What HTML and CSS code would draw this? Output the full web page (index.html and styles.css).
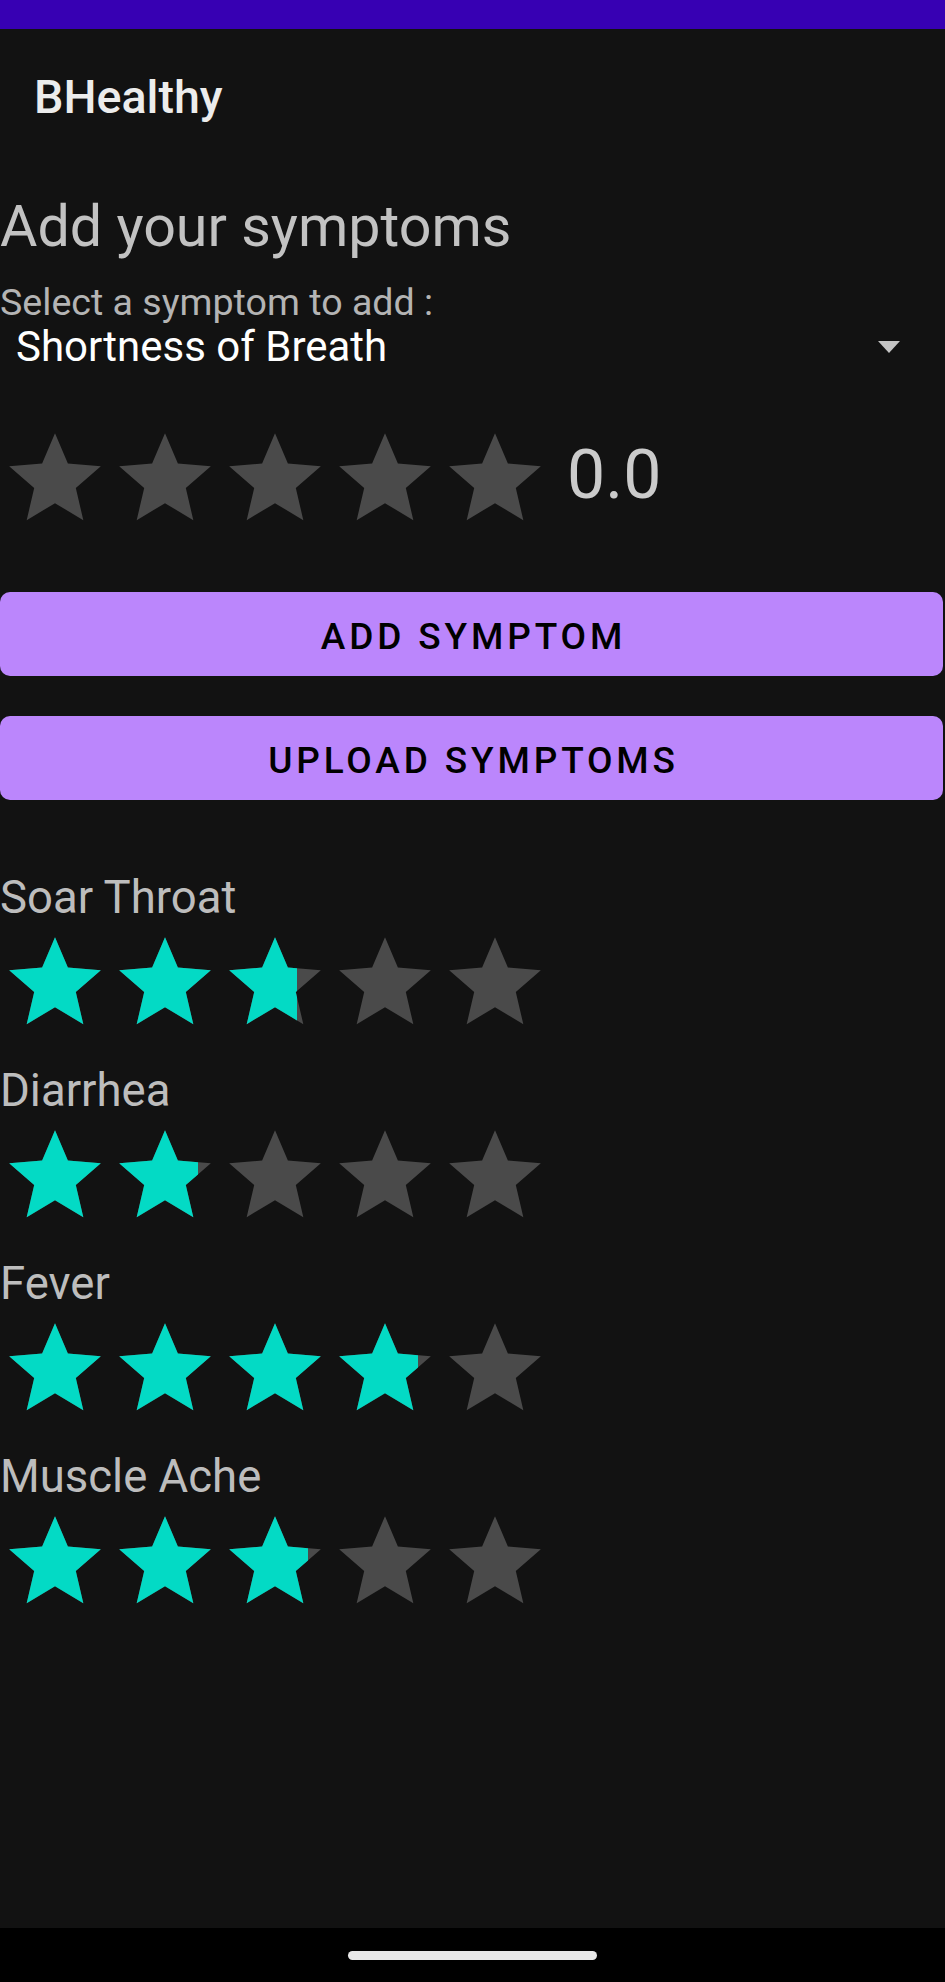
FILE: index.html
```html
<!DOCTYPE html>
<html lang="en">
<head>
<meta charset="utf-8">
<title>BHealthy</title>
<link rel="stylesheet" href="styles.css">
</head>
<body>
<svg class="defs" width="0" height="0" aria-hidden="true">
  <symbol id="star" viewBox="0 0 24 24">
    <path d="M12 17.27L18.18 21l-1.64-7.03L22 9.24l-7.19-.61L12 2 9.19 8.63 2 9.24l5.46 4.73L5.82 21z"/>
  </symbol>
</svg>
<div class="screen">
  <div class="statusbar"></div>
  <header class="toolbar"><h1 class="app-title">BHealthy</h1></header>
  <main class="content">
    <h2 class="page-title">Add your symptoms</h2>
    <p class="select-label">Select a symptom to add :</p>
    <div class="spinner">
      <span class="spinner-value">Shortness of Breath</span>
      <span class="spinner-arrow"></span>
    </div>
    <div class="rating-row">
      <div class="rating">
        <div class="rating-layer">
          <svg class="star"><use href="#star"/></svg><svg class="star"><use href="#star"/></svg><svg class="star"><use href="#star"/></svg><svg class="star"><use href="#star"/></svg><svg class="star"><use href="#star"/></svg>
        </div>
      </div>
      <span class="rating-value">0.0</span>
    </div>
    <button class="btn btn-add">Add Symptom</button>
    <button class="btn btn-upload">Upload Symptoms</button>
    <ul class="symptom-list">
      <li class="symptom">
        <p class="symptom-name">Soar Throat</p>
        <div class="rating">
          <div class="rating-layer"><svg class="star"><use href="#star"/></svg><svg class="star"><use href="#star"/></svg><svg class="star"><use href="#star"/></svg><svg class="star"><use href="#star"/></svg><svg class="star"><use href="#star"/></svg></div>
          <div class="rating-layer rating-fill" style="width:54%"><svg class="star"><use href="#star"/></svg><svg class="star"><use href="#star"/></svg><svg class="star"><use href="#star"/></svg><svg class="star"><use href="#star"/></svg><svg class="star"><use href="#star"/></svg></div>
        </div>
      </li>
      <li class="symptom">
        <p class="symptom-name">Diarrhea</p>
        <div class="rating">
          <div class="rating-layer"><svg class="star"><use href="#star"/></svg><svg class="star"><use href="#star"/></svg><svg class="star"><use href="#star"/></svg><svg class="star"><use href="#star"/></svg><svg class="star"><use href="#star"/></svg></div>
          <div class="rating-layer rating-fill" style="width:36%"><svg class="star"><use href="#star"/></svg><svg class="star"><use href="#star"/></svg><svg class="star"><use href="#star"/></svg><svg class="star"><use href="#star"/></svg><svg class="star"><use href="#star"/></svg></div>
        </div>
      </li>
      <li class="symptom">
        <p class="symptom-name">Fever</p>
        <div class="rating">
          <div class="rating-layer"><svg class="star"><use href="#star"/></svg><svg class="star"><use href="#star"/></svg><svg class="star"><use href="#star"/></svg><svg class="star"><use href="#star"/></svg><svg class="star"><use href="#star"/></svg></div>
          <div class="rating-layer rating-fill" style="width:76%"><svg class="star"><use href="#star"/></svg><svg class="star"><use href="#star"/></svg><svg class="star"><use href="#star"/></svg><svg class="star"><use href="#star"/></svg><svg class="star"><use href="#star"/></svg></div>
        </div>
      </li>
      <li class="symptom">
        <p class="symptom-name">Muscle Ache</p>
        <div class="rating">
          <div class="rating-layer"><svg class="star"><use href="#star"/></svg><svg class="star"><use href="#star"/></svg><svg class="star"><use href="#star"/></svg><svg class="star"><use href="#star"/></svg><svg class="star"><use href="#star"/></svg></div>
          <div class="rating-layer rating-fill" style="width:56%"><svg class="star"><use href="#star"/></svg><svg class="star"><use href="#star"/></svg><svg class="star"><use href="#star"/></svg><svg class="star"><use href="#star"/></svg><svg class="star"><use href="#star"/></svg></div>
        </div>
      </li>
    </ul>
  </main>
  <div class="navbar"><span class="home-pill"></span></div>
</div>
</body>
</html>
```

FILE: styles.css
```css
html, body {
  margin: 0;
  padding: 0;
  background: #121212;
}

body {
  font-family: Roboto, "Noto Sans", "Liberation Sans", sans-serif;
  color: #bdbdbd;
}

.defs {
  position: absolute;
  width: 0;
  height: 0;
  overflow: hidden;
}

.screen {
  height: 100vh;
  display: flex;
  flex-direction: column;
  overflow: hidden;
}

.statusbar {
  height: 29px;
  background: #3700b3;
  flex-shrink: 0;
}

.toolbar {
  height: 129px;
  box-sizing: border-box;
  padding: 6px 0 0 34px;
  display: flex;
  align-items: center;
  flex-shrink: 0;
}

.app-title {
  margin: 0;
  font-size: 46.6px;
  line-height: 46px;
  font-weight: 500;
  color: #ececec;
}

.content {
  flex: 1;
}

.page-title {
  margin: 35px 0 0;
  font-size: 57.4px;
  line-height: 68px;
  font-weight: 400;
  color: #c2c2c2;
}

.select-label {
  margin: 20px 0 0;
  font-size: 37.6px;
  line-height: 42px;
  color: #b4b4b4;
}

.spinner {
  height: 48px;
  padding: 0 45px 0 16px;
  display: flex;
  align-items: center;
  justify-content: space-between;
}

.spinner-value {
  font-size: 42px;
  line-height: 48px;
  color: #ffffff;
}

.spinner-arrow {
  width: 0;
  height: 0;
  border-left: 11.5px solid transparent;
  border-right: 11.5px solid transparent;
  border-top: 12px solid #c4c4c4;
}

.rating-row {
  margin-top: 53px;
  display: flex;
  align-items: flex-start;
}

.rating {
  position: relative;
  width: 550px;
  height: 110px;
  flex-shrink: 0;
}

.rating-layer {
  display: flex;
  width: 550px;
  height: 110px;
  overflow: hidden;
}

.rating-fill {
  position: absolute;
  top: 0;
  left: 0;
}

.star {
  width: 110px;
  height: 110px;
  flex-shrink: 0;
  fill: #4a4a4a;
}

.rating-fill .star {
  fill: #03dac5;
}

.rating-value {
  margin: 11px 0 0 17px;
  font-size: 68px;
  line-height: 80px;
  color: #cbcbcb;
}

.btn {
  display: block;
  width: calc(100% - 2px);
  height: 84px;
  margin: 58px 0 0;
  padding: 5px 0 0 4px;
  border: 0;
  border-radius: 10px;
  background: #bb86fc;
  color: #000000;
  font-family: Roboto, "Noto Sans", "Liberation Sans", sans-serif;
  font-size: 37px;
  font-weight: 500;
  letter-spacing: 3.85px;
  text-transform: uppercase;
}

.btn-upload {
  margin-top: 40px;
}

.symptom-list {
  margin: 72px 0 0;
  padding: 0;
  list-style: none;
}

.symptom + .symptom {
  margin-top: 27px;
}

.symptom-name {
  margin: 0 0 4px;
  font-size: 45.5px;
  line-height: 52px;
  color: #bdbdbd;
}

.navbar {
  height: 54px;
  background: #000000;
  display: flex;
  align-items: center;
  justify-content: center;
  flex-shrink: 0;
}

.home-pill {
  width: 249px;
  height: 9px;
  border-radius: 5px;
  background: #e8e8e8;
}
```
